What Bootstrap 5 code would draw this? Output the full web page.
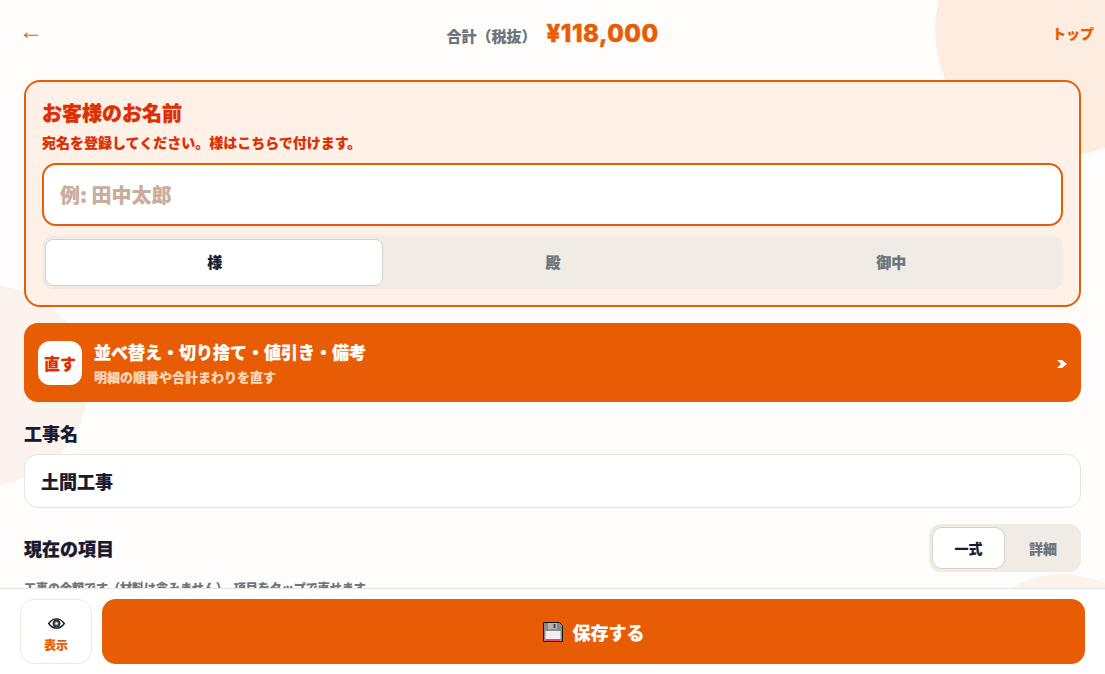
<!DOCTYPE html>
<html lang="ja">
<head>
<meta charset="utf-8">
<title>見積</title>
<link href="https://cdn.jsdelivr.net/npm/bootstrap@5.3.0/dist/css/bootstrap.min.css" rel="stylesheet">
<style>
html,body{height:100%}
body{background:#fffdfb;font-family:"Noto Sans CJK JP",sans-serif;color:#1a1a2e;overflow:hidden;position:relative;font-weight:900;-webkit-text-stroke:.12px currentColor}
.blob{position:absolute;border-radius:50%;z-index:0}
.blob-a{width:252px;height:252px;left:935px;top:-96px;background:#fdece0}
.blob-b{width:200px;height:200px;left:-112px;top:285px;background:#fdf3ee}
.blob-c{width:200px;height:200px;left:963px;top:574px;background:#fdf3ee}
.page{position:relative;z-index:1;padding:0 24px}
.topbar{height:68px;margin:0 -2px 12px -2px;padding-bottom:2px}
.back-arrow{color:#e85d04;font-size:24px;font-weight:400;line-height:1;font-family:"Liberation Sans",sans-serif;text-decoration:none;width:56px;padding-bottom:4px;margin-left:-3px;-webkit-text-stroke:0}
.top-link{color:#e85d04;font-size:14px;text-decoration:none;width:64px;text-align:right;margin-right:-11px}
.sum-label{color:#6c757d;font-size:15px}
.sum-value{color:#e85d04;font-family:Inter,"Noto Sans CJK JP",sans-serif;font-size:24px;font-weight:800;line-height:1;letter-spacing:.5px;-webkit-text-stroke:.5px #e85d04}
.sum-row{gap:10px;margin-top:3px}
.name-panel{background:#fff1e8;border:2px solid #e85d04;border-radius:16px;padding:16px;height:227px;margin-bottom:16px}
.name-title{color:#dc2f02;font-size:20px;line-height:30px;margin:0 0 4px;font-weight:900;-webkit-text-stroke:.3px #dc2f02}
.name-sub{color:#dc2f02;font-size:14px;line-height:21px;margin:0 0 10px}
.name-input{height:63px;border:2px solid #e85d04;border-radius:14px;font-size:20px;font-weight:900;padding:0 16px;background:#fff;margin-bottom:10px}
.name-input::placeholder{color:#c9ae9e;opacity:1}
.seg{background:#f0ebe5;border-radius:10px;padding:3px}
.seg-btn{border:1px solid transparent;background:transparent;color:#6c757d;font-size:15px;font-weight:900;border-radius:8px;padding:0}
.seg-btn.on{background:#fff;border-color:#d9d0c7;color:#1a1a2e}
.seg-wide{height:53px}
.seg-wide .seg-btn{flex:1 1 0;text-indent:1px}
.fix-banner{background:#e85d04;color:#fff;border-radius:14px;height:79px;padding:0 14px;margin-bottom:19px;text-decoration:none}
.fix-icon{width:44px;height:44px;background:#fff;border-radius:12px;color:#dc2f02;font-size:16px;flex:none}
.fix-text{gap:3px;padding-bottom:1px}
.fix-title{font-size:17px;line-height:25px;-webkit-text-stroke:.25px #fff}
.fix-sub{font-size:13px;line-height:19px;color:#ffd7bd}
.chev-svg{width:10px;height:8px;display:block;margin-top:3px}
.field-label{font-size:18px;line-height:24px;margin-bottom:9px}
.job-input{height:54px;border:1px solid #e8e4df;border-radius:14px;font-size:18px;font-weight:900;color:#1a1a2e;padding:0 16px;background:#fff;margin-bottom:16px}
.items-head{height:48px;margin-bottom:7px}
.items-title{font-size:18px;-webkit-text-stroke:.25px #1a1a2e}
.seg-small{width:152px;height:48px;border-radius:12px}
.seg-small .seg-btn{font-size:14px;border-radius:10px}
.seg-small .seg-btn.on{width:73px}
.seg-small .seg-btn:not(.on){flex:1;padding-left:3px}
.hint{font-size:12px;line-height:18px;color:#6c757d;margin:0}
.bottom-bar{position:fixed;left:0;right:0;bottom:0;height:86px;background:#fff;border-top:1px solid #e8e4df;z-index:2;padding:10px 20px;gap:10px}
.view-btn{width:72px;height:65px;background:#fff;border:1px solid #eee8e1;border-radius:14px;color:#e85d04;font-size:12px;font-weight:900;padding:8px 0 0;line-height:1.2;gap:9px}
.view-btn:hover{background:#fff;color:#e85d04;border-color:#eee8e1}
.save-btn{background:#e85d04;border:0;color:#fff;height:65px;border-radius:14px;font-size:18px;font-weight:900;flex:1;gap:10px;padding-top:7px}
.save-btn:hover{background:#e85d04;color:#fff}
.eye-svg{width:17px;height:11px;display:block}
.disk-svg{width:20px;height:20px;display:block}
</style>
</head>
<body>
<div class="blob blob-a"></div>
<div class="blob blob-b"></div>
<div class="blob blob-c"></div>
<main class="page">
  <header class="topbar d-flex align-items-center justify-content-between">
    <a class="back-arrow" href="#">←</a>
    <div class="d-flex align-items-baseline sum-row">
      <span class="sum-label">合計（税抜）</span>
      <span class="sum-value">¥118,000</span>
    </div>
    <a class="top-link" href="#">トップ</a>
  </header>

  <section class="name-panel">
    <h2 class="name-title">お客様のお名前</h2>
    <p class="name-sub">宛名を登録してください。様はこちらで付けます。</p>
    <input class="form-control name-input" type="text" placeholder="例: 田中太郎">
    <div class="seg seg-wide d-flex">
      <button class="btn seg-btn on" type="button">様</button>
      <button class="btn seg-btn" type="button">殿</button>
      <button class="btn seg-btn" type="button">御中</button>
    </div>
  </section>

  <a class="fix-banner d-flex align-items-center gap-2" href="#">
    <span class="fix-icon d-flex align-items-center justify-content-center">直す</span>
    <span class="flex-grow-1 d-flex flex-column ms-1 fix-text">
      <span class="fix-title">並べ替え・切り捨て・値引き・備考</span>
      <span class="fix-sub">明細の順番や合計まわりを直す</span>
    </span>
    <svg class="chev-svg" viewBox="0 0 10 8"><path d="M0 0h5l5 4-5 4H0l4-4z" fill="#fff"/></svg>
  </a>

  <div class="field-label">工事名</div>
  <input class="form-control job-input" type="text" value="土間工事">

  <div class="items-head d-flex align-items-center justify-content-between">
    <div class="items-title">現在の項目</div>
    <div class="seg seg-small d-flex">
      <button class="btn seg-btn on" type="button">一式</button>
      <button class="btn seg-btn" type="button">詳細</button>
    </div>
  </div>
  <p class="hint">工事の金額です（材料は含みません）。項目をタップで直せます。</p>
</main>

<footer class="bottom-bar d-flex">
  <button class="btn view-btn d-flex flex-column align-items-center justify-content-center" type="button">
    <svg class="eye-svg" viewBox="0 0 17 11"><path d="M.7 5.5C3 2.3 5.6.8 8.500.8s5.500 1.500 7.800 4.700c-2.300 3.200-4.900 4.700-7.800 4.700S3 8.700.7 5.500z" fill="#fff" stroke="#111" stroke-width="1.300"/><circle cx="8.500" cy="5.500" r="3.500" fill="#4a5568" stroke="#111"/><circle cx="8.500" cy="5.500" r="1.300" fill="#fff"/></svg>
    <span>表示</span>
  </button>
  <button class="btn save-btn d-flex align-items-center justify-content-center" type="button">
    <svg class="disk-svg" viewBox="0 0 20 20"><path d="M.5.5h16l3 3v16H.5z" fill="#8a8a8a" stroke="#111"/><rect x="5" y="1" width="9" height="6" fill="#b5b5b5"/><rect x="10.500" y="2" width="2" height="4" fill="#444"/><rect x="2.500" y="9" width="15" height="10" fill="#f4eef2"/><rect x="2.500" y="17" width="15" height="2" fill="#e83e8c"/></svg>
    <span>保存する</span>
  </button>
</footer>
<script src="https://cdn.jsdelivr.net/npm/bootstrap@5.3.0/dist/js/bootstrap.bundle.min.js"></script>
</body>
</html>
